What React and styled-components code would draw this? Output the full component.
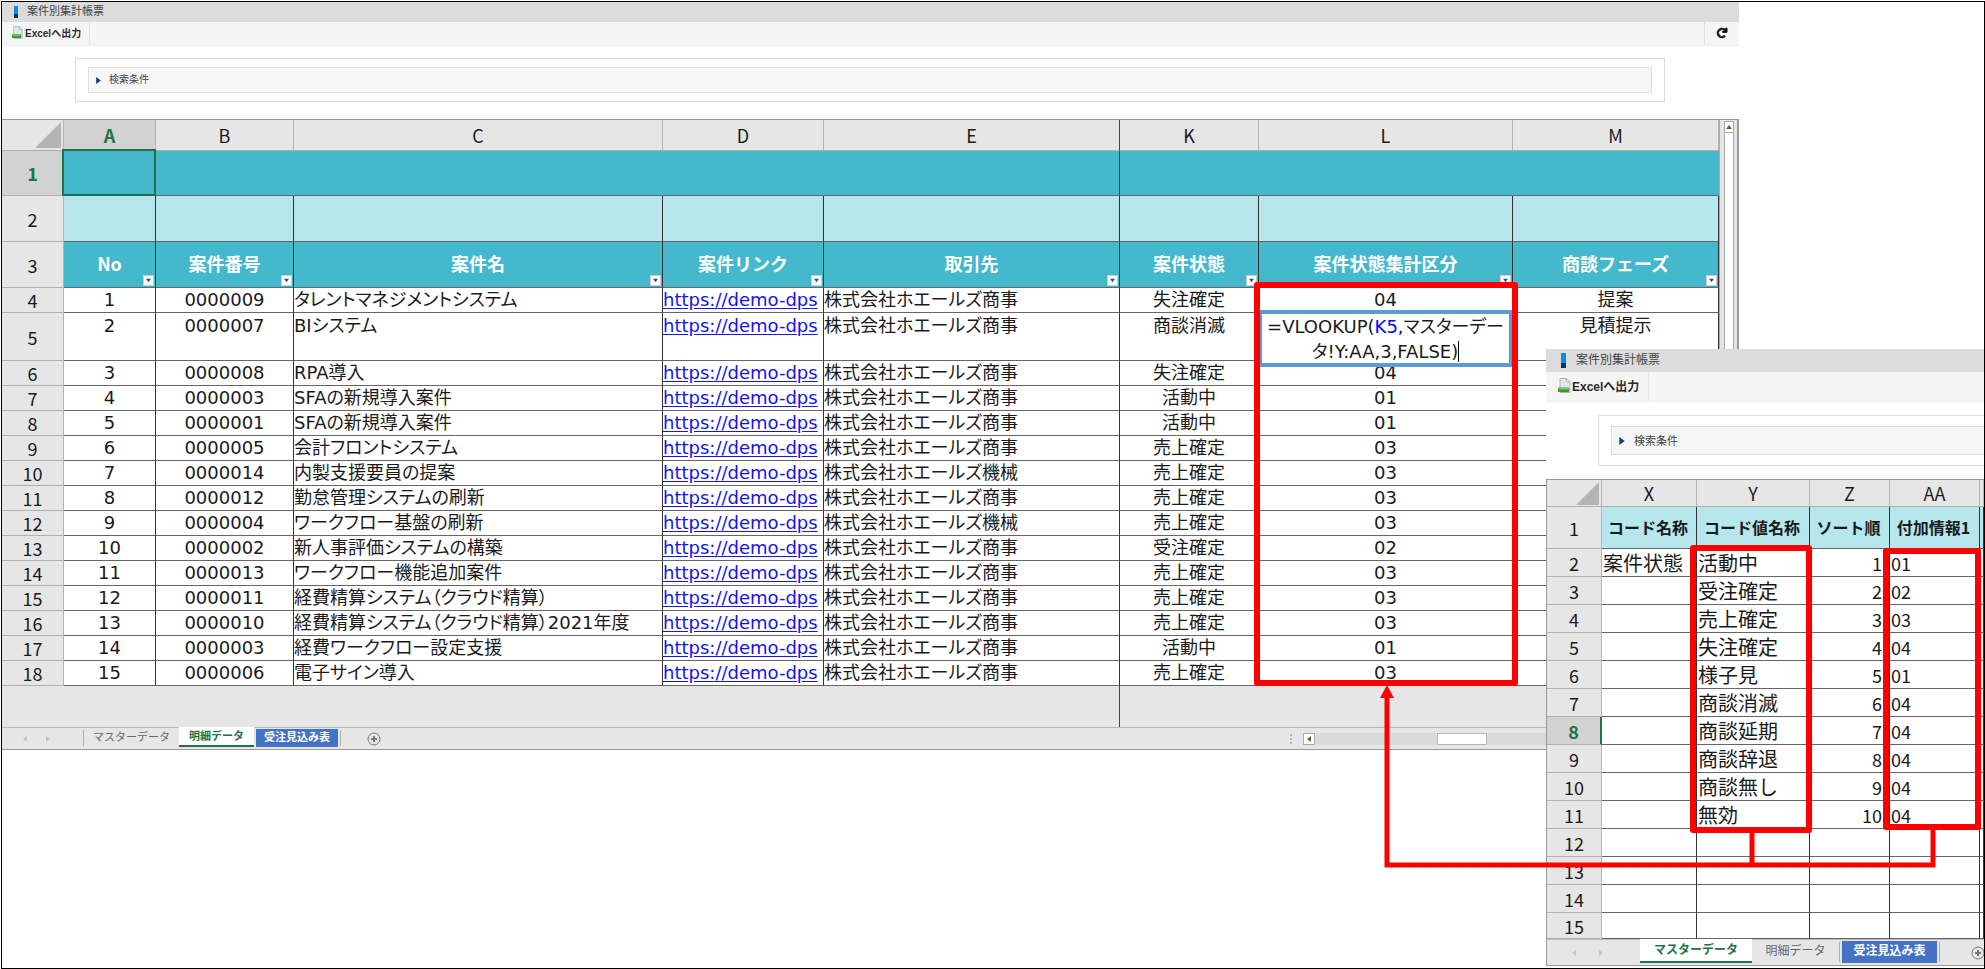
import React, { useState } from "react";
import styled, { createGlobalStyle, css } from "styled-components";
import { FaRedo } from "react-icons/fa";

const GlobalStyle = createGlobalStyle`
  * {
    box-sizing: border-box;
  }
  body {
    margin: 0;
    background: #ffffff;
    font-family: "Liberation Sans", "Noto Sans CJK JP", sans-serif;
  }
  button {
    font-family: inherit;
    cursor: pointer;
  }
`;

const Frame = styled("div")`
  position: relative;
  margin: 1px 0 0 1px;
  min-height: calc(100vh - 1px);
  border: 1px solid #000000;
  overflow: hidden;
`;

const MainWindow = styled("section")`
  width: calc(100% - 245px);
  background: #ffffff;
`;

const SubWindow = styled("section")`
  position: absolute;
  top: 347px;
  left: 1544px;
  right: 0;
  background: #ffffff;
  overflow: hidden;
`;

const TitleBar = styled("header")`
  display: flex;
  align-items: center;
  gap: ${(p) => (p.$large ? 10 : 9)}px;
  height: ${(p) => (p.$large ? 23 : 20)}px;
  padding-left: ${(p) => (p.$large ? 15 : 12)}px;
  background: #dcdcdc;
`;

const TitleMark = styled("span")`
  width: ${(p) => (p.$large ? 5 : 4)}px;
  height: ${(p) => (p.$large ? 15 : 12)}px;
  background: linear-gradient(#0a8be6 70%, #06385f 70%);
`;

const TitleText = styled("h1")`
  margin: 0;
  padding-bottom: 2px;
  font-size: ${(p) => (p.$large ? 12 : 11)}px;
  line-height: 16px;
  font-weight: 400;
  color: #444444;
`;

const Toolbar = styled("div")`
  display: flex;
  justify-content: space-between;
  height: ${(p) => (p.$large ? 30 : 24)}px;
  background: #f5f5f5;
  border-bottom: 1px solid #eeeeee;
`;

const ExportButton = styled("button")`
  display: flex;
  align-items: center;
  gap: ${(p) => (p.$large ? 1 : 2)}px;
  padding: 0 ${(p) => (p.$large ? 9 : 8)}px 2px ${(p) => (p.$large ? 12 : 10)}px;
  border: 0;
  border-right: 1px solid #e4e4e4;
  background: none;
  font-size: ${(p) => (p.$large ? 12 : 10)}px;
  font-weight: 700;
  color: #2a2a2a;
  white-space: nowrap;
`;

const RefreshButton = styled("button")`
  display: flex;
  align-items: center;
  justify-content: center;
  width: 35px;
  padding: 0 0 2px;
  border: 0;
  border-left: 1px solid #e0e0e0;
  background: none;
  font-size: 10px;
  color: #111111;
  svg {
    overflow: visible;
    stroke: #111111;
    stroke-width: 50px;
  }
`;

const SearchPanel = styled("div")`
  margin: ${(p) => (p.$large ? "13px -20px 13px 52px" : "12px 74px 17px 73px")};
  padding: ${(p) => (p.$large ? "10px 12px" : "8px 12px")};
  border: 1px solid #dddddd;
`;

const SearchToggle = styled("button")`
  display: flex;
  align-items: center;
  gap: ${(p) => (p.$large ? 8 : 7)}px;
  width: 100%;
  height: ${(p) => (p.$large ? 29 : 26)}px;
  padding: 0 6px;
  border: 1px solid #dddddd;
  background: #f6f6f6;
  font-size: ${(p) => (p.$large ? 11 : 10)}px;
  line-height: 16px;
  color: #444444;
`;

const Sheet = styled("div")`
  display: flex;
  border-top: 1px solid #999999;
  border-left: ${(p) => (p.$large ? "1px solid #999999" : "0")};
`;

const Grid = styled("table")`
  flex: 1;
  width: 100%;
  min-width: 0;
  table-layout: fixed;
  border-collapse: separate;
  border-spacing: 0;
  font-family: "Noto Sans CJK JP", sans-serif;
  font-size: 18px;
  line-height: 22px;
  color: #1a1a1a;
`;

const Col = styled("col")`
  width: ${(p) => (p.$w ? p.$w + "px" : "auto")};
`;

const Row = styled("tr")`
  height: ${(p) => p.$h}px;
`;

const freezeLine = css`
  border-right: 1px solid #444444;
`;

const HeadCell = styled("th")`
  padding: 0;
  overflow: hidden;
  background: #e6e6e6;
  border-right: 1px solid #b4b4b4;
  border-bottom: 1px solid #b0b0b0;
  font-weight: 400;
  ${(p) => p.$freeze && freezeLine}
  ${(p) =>
    p.$active &&
    css`
      background: #d2d2d2;
      color: #217346;
      font-weight: 700;
    `}
  ${(p) => p.$marker && "border-right: 2px solid #217346;"}
`;

const CornerMark = styled("svg")`
  display: block;
  margin: 0 2px 0 auto;
`;

const Cell = styled("td")`
  position: relative;
  padding: 0 2px;
  background: ${(p) => p.$bg || "#ffffff"};
  border-right: 1px solid #333333;
  border-bottom: 1px solid #666666;
  text-align: ${(p) => p.$align || "left"};
  vertical-align: ${(p) => (p.$top ? "top" : "middle")};
  white-space: nowrap;
`;

const DataCell = styled(Cell)`
  padding: ${(p) => (p.$top ? 2 : 0)}px 0 0;
  font-family: "DejaVu Sans", "Noto Sans CJK JP", sans-serif;
  font-feature-settings: "palt";
`;

const BandCell = styled(Cell)`
  border-right-color: ${(p) => (p.$freeze ? "#444444" : "#44b8cc")};
`;

const SelectedCell = styled(BandCell)`
  &::after {
    content: "";
    position: absolute;
    inset: -2px -1px -1px -2px;
    border: 2px solid #217346;
  }
`;

const TitleCell = styled(Cell)`
  padding-bottom: 3px;
  color: #ffffff;
  font-weight: 700;
`;

const MasterTitle = styled(Cell)`
  overflow: hidden;
  padding: 0 2px 2px 0;
  font-size: 16px;
  font-weight: 700;
`;

const MasterCell = styled(Cell)`
  overflow: hidden;
  padding: 0 ${(p) => (p.$align === "right" ? 7 : 1)}px 0 1px;
  font-size: ${(p) => (p.$text ? 20 : 18)}px;
`;

const EmptyCell = styled("td")`
  padding: 0;
  background: #e6e6e6;
  ${(p) => p.$freeze && freezeLine}
`;

const Clip = styled("div")`
  overflow: hidden;
`;

const CaseLink = styled("a")`
  color: #1414f0;
  text-decoration: underline;
  text-underline-offset: 2px;
`;

const FilterButton = styled("button")`
  position: absolute;
  right: 1px;
  bottom: 1px;
  display: flex;
  align-items: center;
  justify-content: center;
  width: 11px;
  height: 11px;
  padding: 0;
  border: 1px solid #c4ccd8;
  background: #ffffff;
`;

const FormulaEditor = styled("div")`
  position: absolute;
  z-index: 2;
  top: -3px;
  left: 0;
  right: 0;
  height: 57px;
  border: 4px solid #5b9bd5;
  border-width: 4px 3px;
  background: #ffffff;
  line-height: 25px;
  text-align: center;
  outline: none;
`;

const CellRef = styled("span")`
  color: #0000ff;
`;

const Caret = styled("span")`
  border-right: 1px solid #000000;
`;

const VScroll = styled("div")`
  width: 20px;
  padding: 1px 3px 0 4px;
  border-left: 1px solid #aaaaaa;
  border-right: 2px solid #999999;
  background: #e6e6e6;
`;

const VTrack = styled("div")`
  height: 100%;
  border: 1px solid #aaaaaa;
  border-width: 0 1px;
  background: #ffffff;
`;

const ScrollButton = styled("button")`
  display: flex;
  align-items: center;
  justify-content: center;
  flex: none;
  width: 12px;
  height: 12px;
  padding: 0;
  border: 1px solid #aaaaaa;
  background: #ffffff;
`;

const VScrollButton = styled(ScrollButton)`
  width: 100%;
  border-width: 1px 0;
`;

const TabBar = styled("nav")`
  display: flex;
  height: ${(p) => (p.$large ? 27 : 23)}px;
  border-top: 1px solid #bbbbbb;
  border-bottom: 1px solid #999999;
  border-left: ${(p) => (p.$large ? "1px solid #999999" : "0")};
  background: #e6e6e6;
`;

const TabArrows = styled("div")`
  display: flex;
  align-items: center;
  flex: none;
  gap: ${(p) => (p.$large ? 21 : 17)}px;
  width: ${(p) => (p.$large ? 93 : 81)}px;
  padding-left: ${(p) => (p.$large ? 24 : 20)}px;
`;

const Divider = styled("span")`
  flex: none;
  width: 1px;
  margin: 2px 0 3px;
  background: #b0b0b0;
`;

const Tab = styled("button")`
  flex: none;
  width: ${(p) => p.$w}px;
  margin: 0;
  padding: 0 0 ${(p) => (p.$large ? 4 : 3)}px;
  border: 0;
  background: none;
  font-size: ${(p) => (p.$large ? 12 : 11)}px;
  line-height: 16px;
  color: #666666;
  white-space: nowrap;
  ${(p) =>
    p.$kind === "active" &&
    css`
      margin: -1px 0 2px;
      padding-bottom: 0;
      background: #ffffff;
      border-bottom: 2px solid #217346;
      color: #217346;
      font-weight: 700;
    `}
  ${(p) =>
    p.$kind === "blue" &&
    css`
      margin: 1px 2px 2px;
      padding-bottom: 2px;
      background: #4472c4;
      color: #ffffff;
      font-weight: 700;
    `}
`;

const AddTab = styled("button")`
  display: flex;
  align-items: center;
  flex: none;
  margin-left: ${(p) => (p.$large ? 31 : 26)}px;
  padding: 0;
  border: 0;
  background: none;
`;

const HScroll = styled("div")`
  display: flex;
  align-items: center;
  width: 449px;
  margin-left: auto;
`;

const Grip = styled("span")`
  width: 2px;
  height: 10px;
  margin-right: 11px;
  background: repeating-linear-gradient(#b4b4b4 0 2px, transparent 2px 4px);
`;

const HTrack = styled("div")`
  flex: 1;
  height: 12px;
  padding-left: 122px;
  background: #dadada;
`;

const HThumb = styled("div")`
  width: 50px;
  height: 12px;
  border: 1px solid #b4b4b4;
  background: #ffffff;
`;

const Annotations = styled("svg")`
  position: absolute;
  z-index: 5;
  top: 0;
  left: 0;
  width: 100%;
  height: 100%;
  pointer-events: none;
`;

const TEAL = "#44b8cc";
const PALE = "#b5e7ed";

const columns = [
  { id: "A", w: 92, title: "No", align: "center" },
  { id: "B", w: 138, title: "案件番号", align: "center" },
  { id: "C", w: 369, title: "案件名" },
  { id: "D", w: 161, title: "案件リンク" },
  { id: "E", w: 296, title: "取引先", freeze: true },
  { id: "K", w: 139, title: "案件状態", align: "center" },
  { id: "L", w: 254, title: "案件状態集計区分", align: "center" },
  { id: "M", title: "商談フェーズ", align: "center" },
];

const SHOJI = "株式会社ホエールズ商事";
const KIKAI = "株式会社ホエールズ機械";

const cases = [
  ["0000009", "タレントマネジメントシステム", SHOJI, "失注確定", "04", "提案"],
  ["0000007", "BIシステム", SHOJI, "商談消滅", "", "見積提示"],
  ["0000008", "RPA導入", SHOJI, "失注確定", "04", ""],
  ["0000003", "SFAの新規導入案件", SHOJI, "活動中", "01", ""],
  ["0000001", "SFAの新規導入案件", SHOJI, "活動中", "01", ""],
  ["0000005", "会計フロントシステム", SHOJI, "売上確定", "03", ""],
  ["0000014", "内製支援要員の提案", KIKAI, "売上確定", "03", ""],
  ["0000012", "勤怠管理システムの刷新", SHOJI, "売上確定", "03", ""],
  ["0000004", "ワークフロー基盤の刷新", KIKAI, "売上確定", "03", ""],
  ["0000002", "新人事評価システムの構築", SHOJI, "受注確定", "02", ""],
  ["0000013", "ワークフロー機能追加案件", SHOJI, "売上確定", "03", ""],
  ["0000011", "経費精算システム（クラウド精算）", SHOJI, "売上確定", "03", ""],
  ["0000010", "経費精算システム（クラウド精算）2021年度", SHOJI, "売上確定", "03", ""],
  ["0000003", "経費ワークフロー設定支援", SHOJI, "活動中", "01", ""],
  ["0000006", "電子サイン導入", SHOJI, "売上確定", "03", ""],
];

const masterColumns = [
  { id: "X", w: 95, title: "コード名称" },
  { id: "Y", w: 113, title: "コード値名称" },
  { id: "Z", w: 80, title: "ソート順" },
  { id: "AA", w: 90, title: "付加情報1" },
  { id: "", title: "" },
];

const masterRows = [
  ["活動中", "01"],
  ["受注確定", "02"],
  ["売上確定", "03"],
  ["失注確定", "04"],
  ["様子見", "01"],
  ["商談消滅", "04"],
  ["商談延期", "04"],
  ["商談辞退", "04"],
  ["商談無し", "04"],
  ["無効", "04"],
];

const Triangle = ({ dir, color, size = 6 }) => {
  const shapes = {
    up: "0,5 6,5 3,1",
    down: "0,1 6,1 3,5",
    left: "5,0 5,6 1,3",
    right: "1,0 1,6 5,3",
  };
  return (
    <svg width={size} height={size} viewBox="0 0 6 6" aria-hidden="true">
      <polygon points={shapes[dir]} fill={color} />
    </svg>
  );
};

const ExportIcon = ({ large }) => (
  <svg width={large ? 13 : 11} height={large ? 15 : 13} viewBox="0 0 13 15" aria-hidden="true">
    <path d="M2 0.5h6.5l3.5 3.5v10.5h-10z" fill="#dfe8ec" stroke="#a9b9bf" />
    <path d="M8.5 0.5v3.5h3.5z" fill="#ffffff" stroke="#a9b9bf" />
    <rect x="0" y="9.5" width="11" height="4.5" rx="1" fill="#3f9a2c" />
    <rect x="1" y="10" width="9" height="1.5" fill="#7cc862" />
  </svg>
);

const PlusIcon = () => (
  <svg width="14" height="14" viewBox="0 0 14 14" fill="none" stroke="#777777" aria-hidden="true">
    <circle cx="7" cy="7" r="6" />
    <path d="M7 4v6M4 7h6" strokeWidth="2" />
  </svg>
);

const Corner = ({ size }) => (
  <HeadCell>
    <CornerMark width={size} height={size} viewBox="0 0 10 10">
      <polygon points="10,0 10,10 0,10" fill="#b4b4b4" />
    </CornerMark>
  </HeadCell>
);

const WindowTop = ({ large }) => {
  const [open, setOpen] = useState(false);
  return (
    <>
      <TitleBar $large={large}>
        <TitleMark $large={large} />
        <TitleText $large={large}>案件別集計帳票</TitleText>
      </TitleBar>
      <Toolbar $large={large}>
        <ExportButton $large={large}>
          <ExportIcon large={large} />
          Excelへ出力
        </ExportButton>
        {!large && (
          <RefreshButton aria-label="更新">
            <FaRedo />
          </RefreshButton>
        )}
      </Toolbar>
      <SearchPanel $large={large}>
        <SearchToggle $large={large} aria-expanded={open} onClick={() => setOpen(!open)}>
          <Triangle dir={open ? "down" : "right"} color="#0b3f78" size={large ? 8 : 7} />
          検索条件
        </SearchToggle>
      </SearchPanel>
    </>
  );
};

const SheetTabs = ({ large, tabs, children }) => (
  <TabBar $large={large}>
    <TabArrows $large={large}>
      <Triangle dir="left" color="#c4c4c4" />
      <Triangle dir="right" color="#c4c4c4" />
    </TabArrows>
    {!large && <Divider />}
    {tabs.map((t) => (
      <React.Fragment key={t.name}>
        {large && t.kind === "blue" && <Divider />}
        <Tab $large={large} $w={t.w} $kind={t.kind}>
          {t.name}
        </Tab>
      </React.Fragment>
    ))}
    <Divider />
    <AddTab $large={large} aria-label="シートの追加">
      <PlusIcon />
    </AddTab>
    {children}
  </TabBar>
);

const Formula = () => (
  <FormulaEditor contentEditable suppressContentEditableWarning spellCheck={false}>
    =VLOOKUP(<CellRef>K5</CellRef>,マスターデー
    <br />
    タ!Y:AA,3,FALSE)<Caret />
  </FormulaEditor>
);

const CaseRow = ({ index, item }) => {
  const [no, name, customer, status, code, phase] = item;
  const top = index === 1;
  return (
    <Row $h={top ? 48 : 25}>
      <HeadCell scope="row">{index + 4}</HeadCell>
      <DataCell $align="center" $top={top}>{index + 1}</DataCell>
      <DataCell $align="center" $top={top}>{no}</DataCell>
      <DataCell $top={top}>{name}</DataCell>
      <DataCell $top={top}>
        <Clip>
          <CaseLink href="https://demo-dps">https://demo-dps</CaseLink>
        </Clip>
      </DataCell>
      <DataCell $top={top}>{customer}</DataCell>
      <DataCell $align="center" $top={top}>{status}</DataCell>
      <DataCell $align="center" $top={top}>{code || <Formula />}</DataCell>
      <DataCell $align="center" $top={top}>{phase}</DataCell>
    </Row>
  );
};

const DetailSheet = () => (
  <Sheet>
    <Grid>
      <colgroup>
        <Col $w={62} />
        {columns.map((c) => <Col key={c.id} $w={c.w} />)}
      </colgroup>
      <thead>
        <Row $h={31}>
          <Corner size={26} />
          {columns.map((c) => (
            <HeadCell key={c.id} $active={c.id === "A"} $freeze={c.freeze}>{c.id}</HeadCell>
          ))}
        </Row>
      </thead>
      <tbody>
        <Row $h={45}>
          <HeadCell $active>1</HeadCell>
          <SelectedCell $bg={TEAL} />
          {columns.slice(1).map((c) => <BandCell key={c.id} $bg={TEAL} $freeze={c.freeze} />)}
        </Row>
        <Row $h={46}>
          <HeadCell>2</HeadCell>
          {columns.map((c) => <Cell key={c.id} $bg={PALE} />)}
        </Row>
        <Row $h={46}>
          <HeadCell>3</HeadCell>
          {columns.map((c) => (
            <TitleCell key={c.id} $bg={TEAL} $align="center">
              {c.title}
              <FilterButton aria-label={c.title}>
                <Triangle dir="down" color="#33508c" size={5} />
              </FilterButton>
            </TitleCell>
          ))}
        </Row>
        {cases.map((item, i) => <CaseRow key={i} index={i} item={item} />)}
        <Row $h={41}>
          <EmptyCell />
          {columns.map((c) => <EmptyCell key={c.id} $freeze={c.freeze} />)}
        </Row>
      </tbody>
    </Grid>
    <VScroll>
      <VTrack>
        <VScrollButton aria-label="上へ">
          <Triangle dir="up" color="#556b2f" />
        </VScrollButton>
      </VTrack>
    </VScroll>
  </Sheet>
);

const MasterSheet = () => {
  const rows = Array.from({ length: 14 }, (_, i) => masterRows[i] || null);
  return (
    <Sheet $large>
      <Grid>
        <colgroup>
          <Col $w={55} />
          {masterColumns.map((c) => <Col key={c.id} $w={c.w} />)}
        </colgroup>
        <thead>
          <Row $h={27}>
            <Corner size={23} />
            {masterColumns.map((c) => <HeadCell key={c.id}>{c.id}</HeadCell>)}
          </Row>
        </thead>
        <tbody>
          <Row $h={42}>
            <HeadCell>1</HeadCell>
            {masterColumns.map((c) => (
              <MasterTitle key={c.id} $bg={PALE} $align="center">{c.title}</MasterTitle>
            ))}
          </Row>
          {rows.map((r, i) => (
            <Row key={i} $h={i === 13 ? 26 : 28}>
              <HeadCell $active={i === 6} $marker={i === 6}>{i + 2}</HeadCell>
              <MasterCell $text>{i === 0 ? "案件状態" : ""}</MasterCell>
              <MasterCell $text>{r && r[0]}</MasterCell>
              <MasterCell $align="right">{r && i + 1}</MasterCell>
              <MasterCell>{r && r[1]}</MasterCell>
              <MasterCell />
            </Row>
          ))}
        </tbody>
      </Grid>
    </Sheet>
  );
};

const App = () => (
  <>
    <GlobalStyle />
    <Frame>
      <MainWindow>
        <WindowTop />
        <DetailSheet />
        <SheetTabs
          tabs={[
            { name: "マスターデータ", w: 95 },
            { name: "明細データ", w: 75, kind: "active" },
            { name: "受注見込み表", w: 82, kind: "blue" },
          ]}
        >
          <HScroll>
            <Grip />
            <ScrollButton aria-label="左へ">
              <Triangle dir="left" color="#556b2f" />
            </ScrollButton>
            <HTrack>
              <HThumb />
            </HTrack>
          </HScroll>
        </SheetTabs>
      </MainWindow>

      <SubWindow>
        <WindowTop large />
        <MasterSheet />
        <SheetTabs
          large
          tabs={[
            { name: "マスターデータ", w: 112, kind: "active" },
            { name: "明細データ", w: 87 },
            { name: "受注見込み表", w: 95, kind: "blue" },
          ]}
        />
      </SubWindow>

      {/* lookup relation between the two sheets */}
      <Annotations fill="none" stroke="#ff0000" strokeLinejoin="round">
        <rect x="1255" y="283" width="258" height="398" strokeWidth="6" />
        <rect x="1691" y="546" width="116" height="282" strokeWidth="6" />
        <rect x="1884" y="549" width="92" height="276" strokeWidth="6" />
        <path d="M1931 828V863H1385V694" strokeWidth="5" strokeLinejoin="miter" />
        <path d="M1750 830V863" strokeWidth="5" />
        <polygon points="1385,683 1392,696 1378,696" fill="#ff0000" stroke="none" />
      </Annotations>
    </Frame>
  </>
);

export default App;
